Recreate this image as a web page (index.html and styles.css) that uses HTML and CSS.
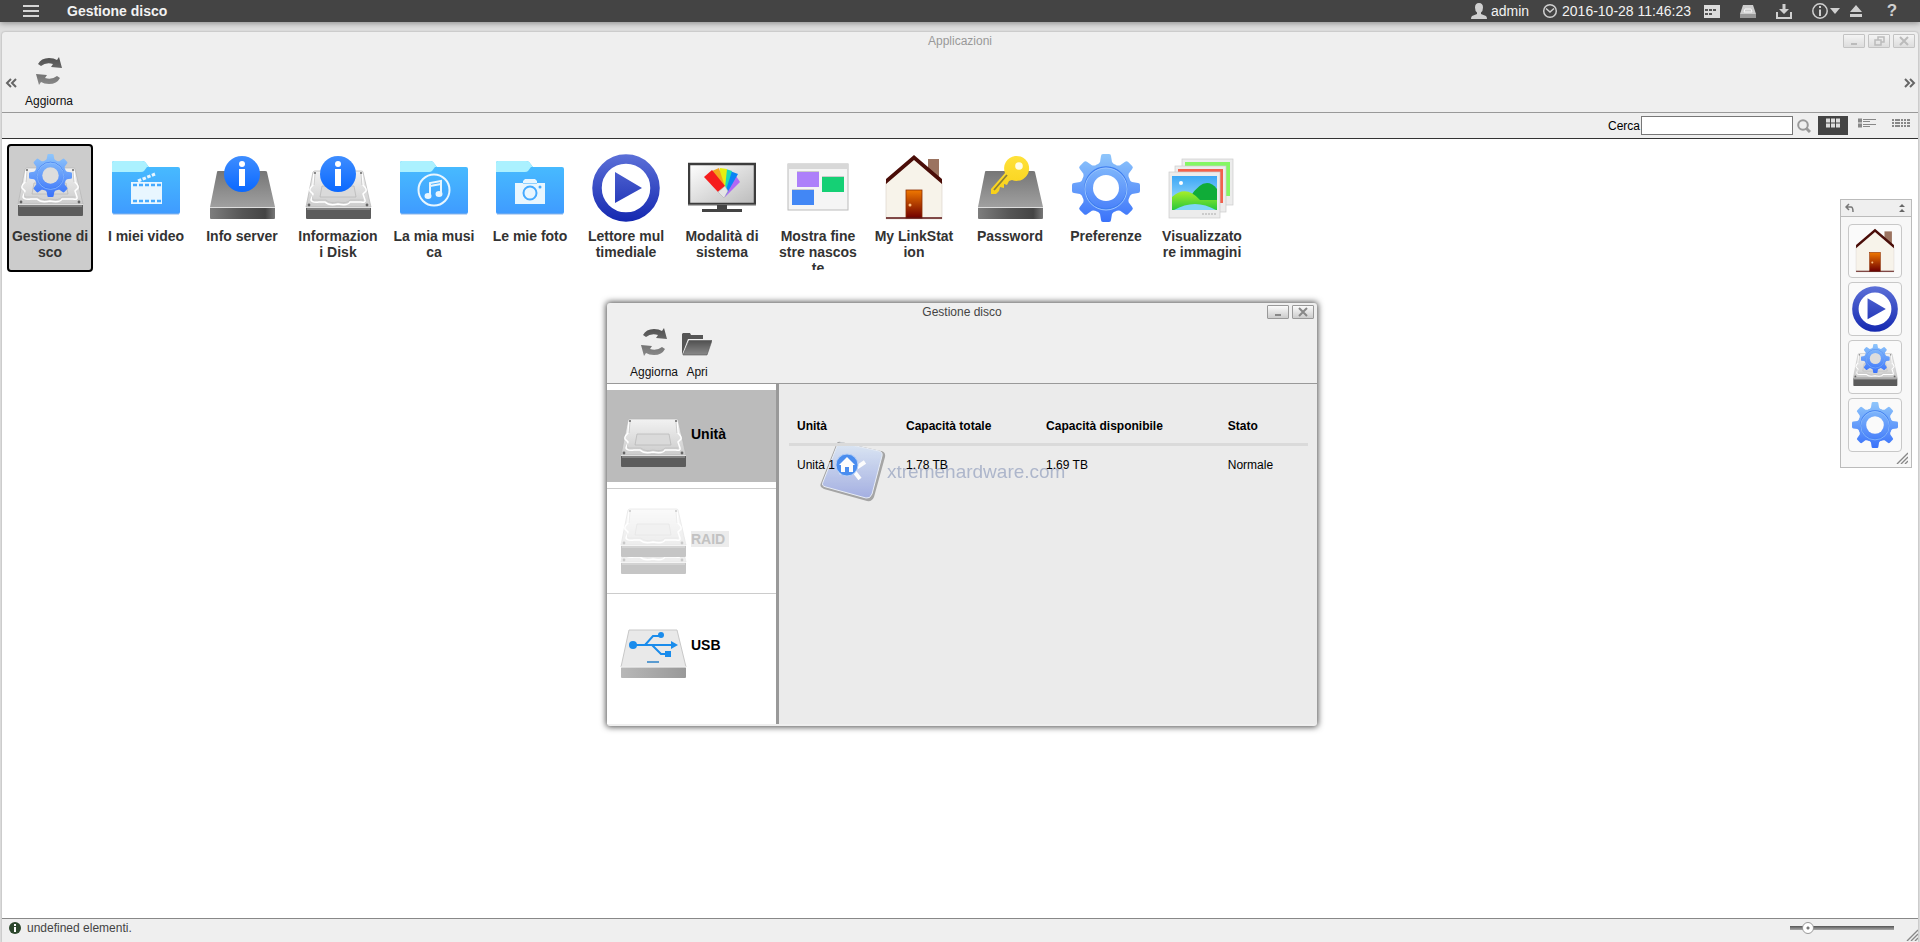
FILE: index.html
```html
<!DOCTYPE html>
<html lang="it">
<head>
    <meta charset="UTF-8">
    <meta name="viewport" content="width=device-width, initial-scale=1.0">
    <title>Gestione disco</title>
    <link rel="stylesheet" href="styles.css">
</head>
<body>

    <!-- icone condivise -->
    <svg class="sprite" width="0" height="0" aria-hidden="true">
        <defs>
            <linearGradient id="g-metal" x1="0" y1="0" x2="0" y2="1"><stop offset="0" stop-color="#f2f2f2"/><stop offset="1" stop-color="#cccccc"/></linearGradient>
            <linearGradient id="g-dark" x1="0" y1="0" x2="0" y2="1"><stop offset="0" stop-color="#767676"/><stop offset="1" stop-color="#a0a0a0"/></linearGradient>
            <linearGradient id="g-front" x1="0" y1="0" x2="1" y2="0"><stop offset="0" stop-color="#7d7d7d"/><stop offset="0.5" stop-color="#555"/><stop offset="0.85" stop-color="#444"/><stop offset="1" stop-color="#777"/></linearGradient>
            <linearGradient id="g-usb" x1="0" y1="0" x2="1" y2="0"><stop offset="0" stop-color="#b8b8b8"/><stop offset="1" stop-color="#999"/></linearGradient>
            <linearGradient id="g-folder" x1="0" y1="0" x2="0" y2="1"><stop offset="0" stop-color="#48beff"/><stop offset="1" stop-color="#3f9bff"/></linearGradient>
            <linearGradient id="g-gear" x1="0" y1="0" x2="0" y2="1"><stop offset="0" stop-color="#8fc6fb"/><stop offset="1" stop-color="#3a72fa"/></linearGradient>
            <linearGradient id="g-info" x1="0" y1="0" x2="0" y2="1"><stop offset="0" stop-color="#3e8dff"/><stop offset="1" stop-color="#0a68ff"/></linearGradient>
            <linearGradient id="g-play" gradientUnits="userSpaceOnUse" x1="0" y1="0" x2="0" y2="68"><stop offset="0" stop-color="#5c70d8"/><stop offset="1" stop-color="#1428b0"/></linearGradient>
            <linearGradient id="g-screen" x1="0" y1="0" x2="1" y2="1"><stop offset="0" stop-color="#fff"/><stop offset="1" stop-color="#bbb"/></linearGradient>
            <linearGradient id="g-door" x1="0" y1="0" x2="0" y2="1"><stop offset="0" stop-color="#f07800"/><stop offset="1" stop-color="#700000"/></linearGradient>
            <linearGradient id="g-sky" x1="0" y1="0" x2="0" y2="1"><stop offset="0" stop-color="#3ba7f5"/><stop offset="1" stop-color="#b5e6ff"/></linearGradient>
            <linearGradient id="g-hill" x1="0" y1="0" x2="0" y2="1"><stop offset="0" stop-color="#a8ee28"/><stop offset="1" stop-color="#27c83c"/></linearGradient>
            <linearGradient id="g-key" x1="0" y1="0" x2="0" y2="1"><stop offset="0" stop-color="#ffe23a"/><stop offset="1" stop-color="#f8d018"/></linearGradient>
            <linearGradient id="g-tool" x1="0" y1="0" x2="0" y2="1"><stop offset="0" stop-color="#505050"/><stop offset="1" stop-color="#8a8a8a"/></linearGradient>
            <linearGradient id="g-mark" x1="0" y1="0" x2="0" y2="1"><stop offset="0" stop-color="#d9e6f5"/><stop offset="1" stop-color="#98a5e0"/></linearGradient>
            <path id="tooth" d="M31 0 H37 Q39 0 39 2 L40 8 Q41 10 44 11 V16 H24 V11 Q27 10 28 8 L29 2 Q29 0 31 0Z"/>
            <mask id="gear-mask">
                <g fill="#fff">
                    <circle cx="34" cy="34" r="24"/>
                    <use href="#tooth"/>
                    <use href="#tooth" transform="rotate(45 34 34)"/>
                    <use href="#tooth" transform="rotate(90 34 34)"/>
                    <use href="#tooth" transform="rotate(135 34 34)"/>
                    <use href="#tooth" transform="rotate(180 34 34)"/>
                    <use href="#tooth" transform="rotate(225 34 34)"/>
                    <use href="#tooth" transform="rotate(270 34 34)"/>
                    <use href="#tooth" transform="rotate(315 34 34)"/>
                </g>
                <circle cx="34" cy="34" r="13" fill="#000"/>
            </mask>
        </defs>

        <symbol id="i-gear" viewBox="0 0 68 68">
            <rect width="68" height="68" fill="url(#g-gear)" mask="url(#gear-mask)"/>
            <circle cx="34" cy="34" r="21" fill="none" stroke="#3f7ff0" stroke-width="1.5"/>
            <circle cx="34" cy="35" r="21" fill="none" stroke="#9cc6ff" stroke-width="1"/>
        </symbol>

        <symbol id="i-disk" viewBox="0 0 68 68">
            <path d="M9 18 Q10 17 11 17 H57 Q59 17 59 18 L67 53 H2Z" fill="url(#g-metal)" stroke="#b5b5b5" stroke-width="0.7"/>
            <path d="M10 20 L9 31 Q5 35 6 37 L9 40 L7 46 Q8 49 15 48 L21 48 Q25 52 34 50 Q44 52 46 48 H57 Q62 49 61 46 L59 40 L62 37 Q63 35 59 31 L58 20" fill="none" stroke="#fff" stroke-width="1.5"/>
            <path d="M11 20 L10 31 M57 20 L58 31 M8 41 L9 46 H22 Q26 50 34 48 Q43 50 46 46 H59" fill="none" stroke="#b9b9b9" stroke-width="0.6"/>
            <path d="M18 32 H50 L52 43 H16Z" fill="#dadada" stroke="#b4b4b4" stroke-width="0.7"/>
            <g fill="#666"><circle cx="11" cy="19" r="1"/><circle cx="57" cy="19" r="1"/><circle cx="5" cy="51" r="1.4"/><circle cx="63" cy="51" r="1.4"/></g>
            <rect x="2" y="53" width="65" height="12" rx="1" fill="#5c5c5c"/>
            <rect x="3" y="53" width="63" height="3" fill="#828282"/>
            <path d="M2 53.5 H67" stroke="#e0e0e0"/>
        </symbol>

        <symbol id="i-server" viewBox="0 0 68 68">
            <path d="M9 18 Q9 17 10 17 H57 Q59 17 59 18 L67 53 H2Z" fill="url(#g-dark)"/>
            <rect x="2" y="53" width="65" height="12" rx="1" fill="url(#g-front)"/>
            <path d="M2 53.5 H67" stroke="#ddd"/>
        </symbol>

        <symbol id="i-badge" viewBox="0 0 68 68">
            <circle cx="34" cy="20" r="18" fill="url(#g-info)"/>
            <circle cx="34" cy="10" r="3" fill="#fff"/>
            <path d="M31 15 H37 V32 H31Z" fill="#fff"/>
        </symbol>

        <symbol id="i-diskgear" viewBox="0 0 68 68">
            <use href="#i-disk" x="0" y="-3" width="68" height="68"/>
            <circle cx="34" cy="22" r="9" fill="#ddd"/>
            <use href="#i-gear" x="13" y="0" width="43" height="43"/>
        </symbol>

        <symbol id="i-folder" viewBox="0 0 68 68">
            <path d="M0 9 Q0 7 2 7 H30 Q32 7 33 8 L37 13 H66 Q68 13 68 15 V58 Q68 60 66 60 H2 Q0 60 0 58Z" fill="url(#g-folder)"/>
            <path d="M0 9 Q0 7 2 7 H30 Q32 7 33 8 L37 13 H35 L32 17 Q31 18 29 18 H0Z" fill="#abf1ff"/>
            <path d="M1 60 H67" stroke="#8ab4e8" stroke-width="1"/>
        </symbol>

        <symbol id="i-play" viewBox="0 0 68 68">
            <circle cx="34" cy="34" r="29" fill="#fff" stroke="url(#g-play)" stroke-width="9.5"/>
            <path d="M23 18 L50 34 L23 49Z" fill="url(#g-play)"/>
        </symbol>

        <symbol id="i-home" viewBox="0 0 68 68">
            <rect x="48" y="5" width="11" height="20" fill="#9b7360"/>
            <path d="M6 28 L34 4 L62 28 V65 H6Z" fill="#f7f3ea" stroke="#d8d0c8" stroke-width="0.6"/>
            <path d="M6 25 L34 1 L62 25 V30 L34 6 L6 30Z" fill="#4a0d08"/>
            <rect x="26" y="36" width="16" height="28" fill="url(#g-door)" stroke="#8a2c00" stroke-width="0.8"/>
            <circle cx="30" cy="51" r="1.5" fill="#ffc080"/>
            <path d="M6 64 H62" stroke="#5a1010" stroke-width="1.5"/>
        </symbol>

        <symbol id="i-refresh" viewBox="0 0 28 28">
            <path d="M3 7 Q6 1 14 1 Q19 1 22 3 L24 0 L27 11 L16 10 L18 7 Q11 5 6 9Z M25 21 Q22 27 14 27 Q9 27 6 25 L4 28 L1 17 L12 18 L10 21 Q17 23 22 19Z" fill="url(#g-tool)"/>
        </symbol>

        <symbol id="i-resize" viewBox="0 0 12 12">
            <path d="M1 12 L12 1 M5 12 L12 5 M9 12 L12 9" stroke="#888" stroke-width="1.4"/>
        </symbol>

        <symbol id="i-min" viewBox="0 0 20 12"><path d="M7 9 H13" stroke="currentColor" stroke-width="2"/></symbol>
        <symbol id="i-close" viewBox="0 0 20 12"><path d="M6 2 L14 10 M14 2 L6 10" stroke="currentColor" stroke-width="2"/></symbol>
        <symbol id="i-restore" viewBox="0 0 20 12"><path d="M9 5 V2 H15 V7 H12 M6 5 H12 V10 H6Z" fill="none" stroke="currentColor" stroke-width="1.5"/></symbol>
    </svg>

    <header class="topbar">
        <button class="menu-btn" aria-label="Menu"><svg viewBox="0 0 16 12"><path d="M0 1 H16 M0 6 H16 M0 11 H16" stroke="#d5d5d5" stroke-width="2"/></svg></button>
        <h1>Gestione disco</h1>
        <div class="top-info">
            <svg class="ico" viewBox="0 0 16 16"><path d="M8 0 Q12 0 12 4.500 Q12 8 10 9.500 V11 L15 13 Q16 14 16 16 H0 Q0 14 1 13 L6 11 V9.500 Q4 8 4 4.500 Q4 0 8 0Z" fill="#d0d0d0"/></svg>
            <span>admin</span>
        </div>
        <div class="top-info">
            <svg class="ico" viewBox="0 0 16 16"><circle cx="8" cy="8" r="6.300" fill="none" stroke="#d0d0d0" stroke-width="1.500"/><path d="M4 5.500 L8 9 L12 5.500" fill="none" stroke="#d0d0d0" stroke-width="1.500"/></svg>
            <span>2016-10-28 11:46:23</span>
        </div>
        <nav class="top-actions">
            <button aria-label="Calendario"><svg class="ico" viewBox="0 0 16 16"><path d="M0 2 H16 V15 H0Z" fill="#dcdcdc"/><path d="M1 7 H4 M5 7 H8 M9 7 H12 M1 11 H4 M5 11 H8" stroke="#555" stroke-width="2"/></svg></button>
            <button aria-label="Disco"><svg class="ico" viewBox="0 0 16 16"><path d="M3 2 H13 L16 11 V15 H0 V11Z" fill="#ccc"/><path d="M0 11 H16 V15 H0Z" fill="#999"/><path d="M5 6 H11 L12 9 H4Z" fill="none" stroke="#f5f5f5"/></svg></button>
            <button aria-label="Scarica"><svg class="ico" viewBox="0 0 16 16"><path d="M6.500 1 H9.500 V6 H13 L8 11 L3 6 H6.500Z" fill="#d0d0d0"/><path d="M1 9 V15 H15 V9" fill="none" stroke="#d0d0d0" stroke-width="2"/></svg></button>
            <button class="wide" aria-label="Informazioni"><svg class="ico" viewBox="0 0 16 16"><circle cx="8" cy="8" r="7.200" fill="none" stroke="#d0d0d0" stroke-width="1.500"/><path d="M8 3 V5 M8 6.500 V13" stroke="#d0d0d0" stroke-width="2"/></svg><svg class="caret" viewBox="0 0 10 6"><path d="M0 0 H10 L5 6Z" fill="#d0d0d0"/></svg></button>
            <button class="eject" aria-label="Espelli"><svg class="ico" viewBox="0 0 16 16"><path d="M8 2 L14 9 H2Z M2 11 H14 V14 H2Z" fill="#d0d0d0"/></svg></button>
            <button class="help" aria-label="Aiuto">?</button>
        </nav>
    </header>

    <main class="window">
        <div class="titlebar">
            <h2>Applicazioni</h2>
            <div class="win-buttons faded">
                <button aria-label="Riduci"><svg><use href="#i-min"/></svg></button>
                <button aria-label="Ripristina"><svg><use href="#i-restore"/></svg></button>
                <button aria-label="Chiudi"><svg><use href="#i-close"/></svg></button>
            </div>
        </div>
        <div class="toolbar">
            <button class="scroll-btn" aria-label="Indietro"><svg viewBox="0 0 12 10"><path d="M6 1 L2 5 L6 9 M11 1 L7 5 L11 9" fill="none" stroke="#666" stroke-width="2"/></svg></button>
            <button class="tool"><svg><use href="#i-refresh"/></svg>Aggiorna</button>
            <button class="scroll-btn last" aria-label="Avanti"><svg viewBox="0 0 12 10"><path d="M1 1 L5 5 L1 9 M6 1 L10 5 L6 9" fill="none" stroke="#666" stroke-width="2"/></svg></button>
        </div>
        <div class="search-row">
            <label for="cerca">Cerca</label>
            <input type="text" id="cerca" name="cerca">
            <button class="search-btn" aria-label="Cerca"><svg viewBox="0 0 14 14"><circle cx="6" cy="6" r="4.800" fill="none" stroke="#999" stroke-width="2"/><path d="M9 9 L13 13" stroke="#999" stroke-width="3"/></svg></button>
            <div class="views">
                <button class="view active" aria-label="Icone"><svg viewBox="0 0 18 10"><path d="M2 2.500 H6 M7 2.500 H11 M12 2.500 H16 M2 7.500 H6 M7 7.500 H11 M12 7.500 H16" stroke="#ddd" stroke-width="4"/></svg></button>
                <button class="view" aria-label="Dettagli"><svg viewBox="0 0 18 10"><path d="M0 2.500 H4 M0 7.500 H4" stroke="#888" stroke-width="4"/><path d="M5 1.500 H18 M5 3.500 H12 M5 6.500 H18 M5 8.500 H12" stroke="#888"/></svg></button>
                <button class="view" aria-label="Elenco"><svg viewBox="0 0 18 10"><path d="M0 2 H2 M3 2 H8 M9 2 H11 M12 2 H14 M15 2 H18 M0 5 H2 M3 5 H8 M9 5 H11 M12 5 H14 M15 5 H18 M0 8 H2 M3 8 H8 M9 8 H11 M12 8 H14 M15 8 H18" stroke="#888" stroke-width="2"/></svg></button>
            </div>
        </div>

        <div class="apps">
            <button class="app selected"><svg viewBox="0 0 68 68"><use href="#i-diskgear"/></svg><span>Gestione di<br>sco</span></button>
            <button class="app">
                <svg viewBox="0 0 68 68"><use href="#i-folder"/>
                    <path d="M19 28 H50 V50 H19Z" fill="#e8f6ff"/>
                    <path d="M21 31 H49 M21 47 H49" stroke="#45aaff" stroke-width="2.500" stroke-dasharray="4 2"/>
                    <path d="M26 27 L43 20" stroke="#e8f6ff" stroke-width="3" stroke-dasharray="3.500 1.500"/>
                </svg>
                <span>I miei video</span>
            </button>
            <button class="app"><svg viewBox="0 0 68 68"><use href="#i-server"/><use href="#i-badge"/></svg><span>Info server</span></button>
            <button class="app"><svg viewBox="0 0 68 68"><use href="#i-disk"/><use href="#i-badge"/></svg><span>Informazion<br>i Disk</span></button>
            <button class="app">
                <svg viewBox="0 0 68 68"><use href="#i-folder"/>
                    <g fill="none" stroke="#e8f6ff"><circle cx="34" cy="36" r="15.500" stroke-width="2"/><path d="M30 42 V29 L41 27 V40 M30 32 L41 30" stroke-width="2"/></g>
                    <g fill="#e8f6ff"><ellipse cx="28" cy="42" rx="3.500" ry="3"/><ellipse cx="39" cy="40" rx="3.500" ry="3"/></g>
                </svg>
                <span>La mia musi<br>ca</span>
            </button>
            <button class="app">
                <svg viewBox="0 0 68 68"><use href="#i-folder"/>
                    <path d="M19 29 H27 V27 L29 25 H39 L41 27 V29 H49 V50 H19Z" fill="#e8f6ff"/>
                    <circle cx="34" cy="39" r="6.500" fill="none" stroke="#45aaff" stroke-width="2"/><circle cx="44" cy="33" r="1.500" fill="#45aaff"/>
                    <path d="M27 29.500 H41" stroke="#8fd0ff"/>
                </svg>
                <span>Le mie foto</span>
            </button>
            <button class="app"><svg viewBox="0 0 68 68"><use href="#i-play"/></svg><span>Lettore mul<br>timediale</span></button>
            <button class="app">
                <svg viewBox="0 0 68 68">
                    <rect x="1" y="10" width="66" height="40" fill="url(#g-screen)" stroke="#3c3c3c" stroke-width="2.500"/>
                    <path d="M0 51 H68" stroke="#999"/>
                    <path d="M29 51 H39 V55 H54 V58 H14 V55 H29Z" fill="#444"/>
                    <path d="M46 19 L52 28 L37 43 L34 39Z" fill="#b069f5"/>
                    <path d="M42 17 L50 20 L38 41 L33 39Z" fill="#0a84f5"/>
                    <path d="M38 15 L44 17 L38 36 L33 36Z" fill="#1cd9b5"/>
                    <path d="M32 14 L39 15 L37 34 L32 36Z" fill="#e6ef10"/>
                    <path d="M24 17 L31 14 L37 33 L32 36Z" fill="#f3a61c"/>
                    <path d="M16 23 L24 16 L37 32 L30 38Z" fill="#f51c1c"/>
                    <path d="M30 38 L37 32 L40 37 L36 44Z" fill="#e5e5e5" stroke="#aaa" stroke-width="0.500"/>
                </svg>
                <span>Modalità di<br>sistema</span>
            </button>
            <button class="app">
                <svg viewBox="0 0 68 68">
                    <rect x="4" y="10" width="60" height="46" fill="#f5f5f5" stroke="#bbb"/>
                    <rect x="4" y="10" width="60" height="5" fill="#d8d8d8"/>
                    <path d="M13 18 H35 V33 H13Z" fill="#ad80fa"/><path d="M38 23 H60 V38 H38Z" fill="#15d075"/><path d="M8 36 H30 V51 H8Z" fill="#4287f5"/>
                    <path d="M13 17.500 H35 M38 22.500 H60 M8 35.500 H30" stroke="#ccc"/>
                </svg>
                <span>Mostra fine<br>stre nascos<br>te</span>
            </button>
            <button class="app"><svg viewBox="0 0 68 68"><use href="#i-home"/></svg><span>My LinkStat<br>ion</span></button>
            <button class="app">
                <svg viewBox="0 0 68 68"><use href="#i-server"/>
                    <path d="M29 19 A12.500 12.500 0 1 1 36 26 L33 27 L31 31 L28 30 L28 34 L24 33 L23 37 L20 40 L15 40 V35Z" fill="url(#g-key)"/>
                    <circle cx="43" cy="12" r="3.800" fill="#fffde5"/>
                    <path d="M31 21 L18 36" stroke="#8a7f3a" stroke-width="1.800"/>
                </svg>
                <span>Password</span>
            </button>
            <button class="app"><svg viewBox="0 0 68 68"><use href="#i-gear"/></svg><span>Preferenze</span></button>
            <button class="app">
                <svg viewBox="0 0 68 68">
                    <g fill="#ececec" stroke="#ccc" stroke-width="0.700">
                        <rect x="14" y="5" width="51" height="46"/><path d="M17 8 H62 V42 H17Z" fill="#84f763" stroke="none"/>
                        <rect x="7" y="12" width="51" height="46"/><path d="M10 15 H55 V49 H10Z" fill="#f2604c" stroke="none"/>
                        <rect x="1" y="18" width="51" height="46"/>
                    </g>
                    <rect x="4" y="22" width="45" height="34" fill="url(#g-sky)"/>
                    <path d="M22 43 Q37 20 49 35 V48 H22Z" fill="#10ac38"/>
                    <path d="M4 43 Q18 30 32 46 H49 V56 H4Z" fill="url(#g-hill)"/>
                    <path d="M6 56 Q27 44 48 56Z" fill="#7fd6f8"/>
                    <circle cx="13" cy="29" r="2" fill="#fff"/>
                    <path d="M34 60 H49" stroke="#aaa" stroke-dasharray="2 1"/>
                </svg>
                <span>Visualizzato<br>re immagini</span>
            </button>
        </div>

        <footer class="status">
            <svg class="status-ico" viewBox="0 0 12 12"><circle cx="6" cy="6" r="6" fill="#2c472c"/><path d="M6 2 V4 M6 5 V10" stroke="#fff" stroke-width="2"/></svg>
            <span>undefined elementi.</span>
            <input type="range" class="zoom" aria-label="Dimensione icone" min="0" max="100" value="13">
            <svg class="corner"><use href="#i-resize"/></svg>
        </footer>
    </main>

    <section class="dialog">
        <div class="titlebar">
            <h2>Gestione disco</h2>
            <div class="win-buttons">
                <button aria-label="Riduci"><svg><use href="#i-min"/></svg></button>
                <button aria-label="Chiudi"><svg><use href="#i-close"/></svg></button>
            </div>
        </div>
        <div class="toolbar">
            <button class="tool"><svg><use href="#i-refresh"/></svg>Aggiorna</button>
            <button class="tool"><svg viewBox="0 0 30 28"><path d="M0 27 V6 L1 5 H8 L9 7 H21 V11 H6 L1 24Z" fill="#555"/><path d="M7 12.500 H30 L25 27 H1Z" fill="url(#g-tool)" stroke="#555" stroke-width="0.600"/></svg>Apri</button>
        </div>
        <div class="dialog-body">
            <nav class="sidebar">
                <button class="unit current"><svg viewBox="0 0 68 68"><use href="#i-disk"/></svg><span>Unità</span></button>
                <button class="unit" disabled>
                    <svg viewBox="0 0 68 68"><use href="#i-disk" width="68" height="68" y="2"/><use href="#i-disk" width="68" height="68" y="-15"/></svg>
                    <span>RAID</span>
                </button>
                <button class="unit">
                    <svg viewBox="0 0 68 68">
                        <path d="M10 17 H58 L67 54 H2Z" fill="#e9e9e9" stroke="#c8c8c8"/>
                        <rect x="2" y="54" width="65" height="11" rx="1" fill="url(#g-usb)"/><path d="M2 54 H67" stroke="#fff"/>
                        <g fill="none" stroke="#1a8cec" stroke-width="2"><path d="M14 32 H54 M26 32 L34 23 H42 M33 32 L42 41 H48"/></g>
                        <g fill="#1a8cec"><circle cx="14" cy="32" r="4"/><circle cx="42" cy="22" r="3"/><path d="M46 38 H52 V44 H46Z M52 28 L59 32 L52 36Z"/></g>
                        <path d="M28 49 H40" stroke="#5a9bd0" stroke-width="2"/>
                    </svg>
                    <span>USB</span>
                </button>
            </nav>
            <div class="content">
                <table>
                    <thead>
                        <tr><th class="c-unit">Unità</th><th class="c-total">Capacità totale</th><th class="c-free">Capacità disponibile</th><th>Stato</th></tr>
                    </thead>
                    <tbody>
                        <tr><td>Unità 1</td><td>1.78 TB</td><td>1.69 TB</td><td>Normale</td></tr>
                    </tbody>
                </table>
                <div class="watermark">
                    <svg viewBox="0 0 68 64">
                        <path d="M22 2 L62 11 Q67 12 66 17 L55 57 Q53 62 48 61 L5 49 Q0 47 2 43 L17 5 Q18 1 22 2Z" fill="#999"/>
                        <path d="M23 3 L60 11 Q64 12 63 16 L53 54 Q51 59 47 58 L7 47 Q2 46 4 42 L18 6 Q20 2 23 3Z" fill="url(#g-mark)" stroke="#e8eef8"/>
                        <path d="M46 22 L34 30 L41 39 M20 33 L30 27" fill="none" stroke="#fff" stroke-width="4"/>
                        <circle cx="28" cy="25" r="11" fill="#2f7df0" stroke="#a8c8f8"/>
                        <path d="M28 17 L36 25 H34 V32 H30 V27 H26 V32 H22 V25 H20Z" fill="#fff"/>
                    </svg>
                    <span>xtremehardware.com</span>
                </div>
            </div>
        </div>
    </section>

    <aside class="dock">
        <div class="dock-head">
            <svg viewBox="0 0 10 10"><path d="M4 1 L1 4 L4 7 M1 4 H6 Q8 4 8 9" fill="none" stroke="#777" stroke-width="1.500"/></svg>
            <svg viewBox="0 0 10 10"><path d="M5 1 L8 4 H2Z M5 6 L8 9 H2Z" fill="#666"/></svg>
        </div>
        <div class="dock-items">
            <button aria-label="My LinkStation"><svg><use href="#i-home"/></svg></button>
            <button aria-label="Lettore multimediale"><svg><use href="#i-play"/></svg></button>
            <button aria-label="Gestione disco"><svg><use href="#i-diskgear"/></svg></button>
            <button aria-label="Preferenze"><svg><use href="#i-gear"/></svg></button>
        </div>
        <svg class="corner"><use href="#i-resize"/></svg>
    </aside>

</body>
</html>
```
FILE: styles.css
```css
* {
    box-sizing: border-box;
}

body {
    font-family: "Liberation Sans", Arial, sans-serif;
    font-size: 12px;
    margin: 0;
    height: 100vh;
    display: flex;
    flex-direction: column;
    background-color: #dedede;
    overflow: hidden;
    position: relative;
}

button {
    font: inherit;
    color: inherit;
    background: none;
    border: none;
    padding: 0;
    cursor: pointer;
}

svg {
    display: block;
    flex: none;
}

h1, h2 {
    margin: 0;
}

.sprite {
    position: absolute;
}

/* barra superiore */
.topbar {
    height: 22px;
    flex: none;
    display: flex;
    align-items: center;
    background-color: #444;
    color: #f2f2f2;
    font-size: 14px;
    padding: 0 20px 0 23px;
    box-shadow: 0 1px 6px rgba(0, 0, 0, 0.4);
}

.menu-btn svg {
    width: 16px;
    height: 12px;
}

.topbar h1 {
    font-size: 14px;
    margin-left: 28px;
    margin-right: auto;
}

.ico {
    width: 16px;
    height: 16px;
}

.top-info {
    display: flex;
    align-items: center;
    gap: 4px;
    margin-right: 13px;
}

.top-actions {
    display: flex;
    align-items: center;
    gap: 20px;
}

.top-actions .wide {
    display: flex;
    align-items: center;
    gap: 2px;
}

.caret {
    width: 10px;
    height: 6px;
}

.top-actions .eject {
    margin-left: -12px;
}

.top-actions .help {
    font-size: 17px;
    font-weight: bold;
    color: #d0d0d0;
    width: 16px;
    line-height: 20px;
}

/* finestra principale */
.window {
    flex: 1;
    min-height: 0;
    margin: 10px 2px 0;
    display: flex;
    flex-direction: column;
    background-color: #efefef;
    border-radius: 3px 3px 0 0;
    box-shadow: 0 0 2px rgba(0, 0, 0, 0.3);
}

.titlebar {
    height: 18px;
    display: flex;
    align-items: center;
    position: relative;
}

.titlebar h2 {
    flex: 1;
    text-align: center;
    font-size: 12px;
    font-weight: normal;
    color: #444;
}

.window .titlebar h2 {
    color: #999;
}

.win-buttons {
    position: absolute;
    right: 3px;
    top: 2px;
    display: flex;
    gap: 3px;
    color: #888;
}

.win-buttons button {
    width: 22px;
    height: 14px;
    border: 1px solid #999;
    border-radius: 1px;
    background: linear-gradient(#fafafa, #ccc);
}

.win-buttons svg {
    width: 20px;
    height: 12px;
}

.win-buttons.faded {
    opacity: 0.5;
}

.toolbar {
    display: flex;
    align-items: center;
    height: 63px;
    border-bottom: 1px solid #999;
}

.window .toolbar {
    padding: 0 2px 0 3px;
}

.scroll-btn svg {
    width: 12px;
    height: 10px;
    margin-top: 4px;
}

.scroll-btn.last {
    margin-left: auto;
}

.tool {
    display: flex;
    flex-direction: column;
    align-items: center;
    gap: 8px;
    padding-top: 4px;
    line-height: 16px;
    color: #111;
}

.window .tool {
    margin-left: 8px;
}

.tool svg {
    width: 28px;
    height: 28px;
}

.search-row {
    display: flex;
    align-items: center;
    justify-content: flex-end;
    height: 26px;
    padding-right: 2px;
    border-bottom: 1px solid #333;
    font-size: 12px;
    flex: none;
}

.search-row input {
    width: 152px;
    height: 19px;
    border: 1px solid #777;
    background-color: #fff;
    margin: 0 4px 0 1px;
    padding: 0 2px;
}

.search-btn svg {
    width: 14px;
    height: 14px;
}

.views {
    display: flex;
    gap: 4px;
    margin-left: 7px;
}

.view {
    width: 30px;
    height: 19px;
    display: flex;
    justify-content: center;
    padding-top: 2px;
}

.view svg {
    width: 18px;
    height: 10px;
}

.view.active {
    background-color: #444;
}

.apps {
    flex: 1;
    min-height: 0;
    background-color: #fff;
    padding: 5px;
    display: flex;
    flex-wrap: wrap;
    align-content: flex-start;
    gap: 10px;
}

.app {
    width: 86px;
    height: 128px;
    border: 2px solid transparent;
    border-radius: 4px;
    padding-top: 8px;
    overflow: hidden;
    display: flex;
    flex-direction: column;
    align-items: center;
    gap: 6px;
    font-size: 14px;
    font-weight: bold;
    line-height: 16px;
    color: #333;
    white-space: nowrap;
}

.app svg {
    width: 68px;
    height: 68px;
}

.app.selected {
    border-color: #000;
    background-color: #ccc;
}

.status {
    height: 24px;
    flex: none;
    display: flex;
    align-items: center;
    border-top: 1px solid #888;
    padding: 0 0 5px 7px;
    color: #444;
    gap: 6px;
}

.status-ico {
    width: 12px;
    height: 12px;
}

.zoom {
    appearance: none;
    width: 104px;
    height: 12px;
    margin: 0 6px 0 auto;
    background: linear-gradient(#555, #aaa) center / 100% 4px no-repeat;
}

.zoom::-webkit-slider-thumb {
    appearance: none;
    width: 12px;
    height: 12px;
    border: 1px solid #999;
    border-radius: 50%;
    background: radial-gradient(#777 1px, #fff 2px);
}

.corner {
    width: 12px;
    height: 12px;
    align-self: flex-end;
}

.status .corner {
    margin-bottom: -4px;
}

/* finestra gestione disco */
.dialog {
    position: absolute;
    left: 607px;
    top: 303px;
    width: 710px;
    background-color: #efefef;
    border-radius: 3px;
    box-shadow: 0 0 6px 1px rgba(0, 0, 0, 0.7);
    padding-bottom: 2px;
}

.dialog .toolbar {
    padding-left: 23px;
    gap: 4px;
}

.dialog .tool:last-child svg {
    width: 30px;
}

.dialog-body {
    display: flex;
    height: 340px;
}

.sidebar {
    width: 172px;
    display: flex;
    flex-direction: column;
    background-color: #fff;
    border-right: 3px solid #999;
}

.unit {
    height: 105px;
    display: flex;
    align-items: center;
    gap: 4px;
    padding-left: 12px;
    border-bottom: 1px solid #ccc;
    font-size: 14px;
    font-weight: bold;
    color: #000;
}

.unit:last-child {
    border-bottom: none;
}

.unit svg {
    width: 68px;
    height: 68px;
}

.unit span {
    margin-bottom: 4px;
}

.unit.current {
    background: linear-gradient(#bbb, #bbb) center / 100% 92px no-repeat;
}

.unit:disabled {
    color: #c2c2c2;
}

.unit:disabled svg {
    opacity: 0.35;
}

.unit:disabled span {
    background-color: #ececec;
    padding-right: 4px;
}

.content {
    flex: 1;
    background-color: #ebebeb;
    padding: 26px 9px 0 10px;
    position: relative;
}

.content table {
    width: 100%;
    table-layout: fixed;
    border-collapse: collapse;
    position: relative;
    z-index: 1;
}

.content th {
    text-align: left;
    height: 34px;
    padding: 0 8px;
    border-bottom: 3px solid #dadada;
}

.content td {
    height: 40px;
    padding: 0 8px;
}

.c-unit {
    width: 21%;
}

.c-total {
    width: 27%;
}

.c-free {
    width: 35%;
}

.watermark {
    position: absolute;
    left: 40px;
    top: 56px;
    display: flex;
    align-items: center;
    opacity: 0.85;
    color: #a3adc6;
    font-size: 19px;
    pointer-events: none;
}

.watermark svg {
    width: 68px;
    height: 64px;
}

/* barra delle scorciatoie */
.dock {
    position: absolute;
    right: 8px;
    top: 199px;
    width: 72px;
    border: 1px solid #bbb;
    background-color: #f7f7f7;
    display: flex;
    flex-direction: column;
}

.dock-head {
    height: 17px;
    display: flex;
    align-items: center;
    justify-content: space-between;
    padding: 0 4px;
    background-color: #efefef;
    border-bottom: 1px solid #bbb;
}

.dock-head svg {
    width: 10px;
    height: 10px;
}

.dock-items {
    display: flex;
    flex-direction: column;
    align-items: flex-start;
    gap: 4px;
    padding: 7px 0 0 7px;
}

.dock-items button {
    width: 54px;
    height: 54px;
    padding: 3px;
    border: 1px solid #c8c8c8;
    border-radius: 4px;
    background-color: #fafafa;
}

.dock-items svg {
    width: 46px;
    height: 46px;
}

.dock .corner {
    margin: 0 3px 3px;
}
```
